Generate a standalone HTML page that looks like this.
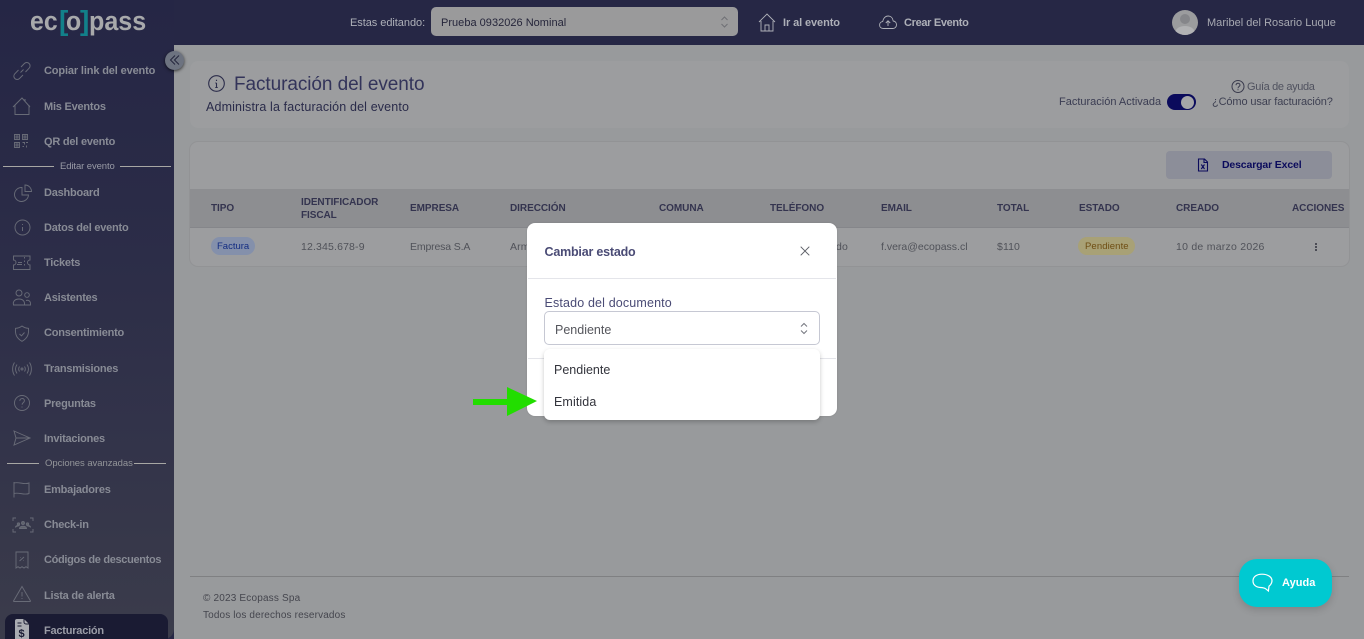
<!DOCTYPE html>
<html lang="es"><head><meta charset="utf-8"><title>Facturación</title>
<style>
*{box-sizing:border-box}
html,body{margin:0;padding:0;width:1364px;height:639px;overflow:hidden;background:#262745;font-family:"Liberation Sans",sans-serif}
.t{position:absolute;white-space:nowrap;line-height:1}
svg{position:absolute;overflow:visible;fill:none}
#side{position:absolute;left:0;top:0;width:174px;height:639px;background:linear-gradient(#252645 0,#2a2b47 200px,#33344a 450px,#3b3c4b 639px);border-bottom-right-radius:10px}
#main{position:absolute;left:174px;top:45px;width:1190px;height:594px;background:#989a9c}
.nav{font-size:11px;font-weight:bold;color:#888b95;left:44px;letter-spacing:-.22px;margin-top:1px}
.ic{left:12px;stroke:#686b77;stroke-width:.95}
.th{font-size:10px;font-weight:bold;color:#34344f;letter-spacing:-.05px;line-height:13px;margin-top:1px}
.td{font-size:10.5px;color:#505259;letter-spacing:.1px;margin-top:.5px}
.card{position:absolute;background:#9c9d9f;border-radius:8px}
.lg{font-size:27px;font-weight:bold;color:#a8a9ab;transform-origin:0 0}
</style></head><body>
<div id="side"></div>
<div id="main"></div>

<!-- logo -->
<div class="t lg" style="left:30px;top:8px;transform:scaleX(.92)">ec</div>
<div class="t" style="left:59px;top:7px;font-size:28px;font-weight:bold;color:#12808a">[</div>
<div class="t lg" style="left:66px;top:8px;transform:scaleX(.92)">o</div>
<div class="t" style="left:80px;top:7px;font-size:28px;font-weight:bold;color:#12808a">]</div>
<div class="t lg" style="left:89px;top:8px;transform:scaleX(.93)">pass</div>

<!-- top bar -->
<div class="t" style="left:350px;top:18px;font-size:11px;color:#aeb0b8;letter-spacing:-.05px">Estas editando:</div>
<div style="position:absolute;left:431px;top:7px;width:307px;height:29px;background:#9a9a9b;border-radius:5px"></div>
<div class="t" style="left:441px;top:18px;font-size:11px;color:#25253a;letter-spacing:.02px">Prueba 0932026 Nominal</div>
<svg style="left:720px;top:15px" width="9" height="14" stroke="#6f7075" stroke-width="1"><path d="M1.5 5 4.500 2 7.500 5M1.5 9 4.500 12 7.500 9"/></svg>
<svg style="left:758px;top:13px" width="18" height="19" stroke="#b0b2b9" stroke-width=".9"><path d="M1 9 9 1l8 8M3 8v10h12V8M7 18v-6h4v6"/></svg>
<div class="t" style="left:783px;top:18px;font-size:11px;font-weight:bold;color:#aeb0b8;letter-spacing:-.1px">Ir al evento</div>
<svg style="left:879px;top:15px" width="18" height="15" stroke="#b0b2b9" stroke-width=".9"><path d="M4.500 13.500C1.500 13.500.6 11.600.6 10 .6 8 2 6.700 3.700 6.600 4.300 3 6.500 1 9 1c2.800 0 4.800 2 5.200 5 2 .2 3.300 1.800 3.300 3.800 0 2-1.500 3.700-3.800 3.700zM9 11V6M6.800 8 9 5.800 11.200 8"/></svg>
<div class="t" style="left:904px;top:18px;font-size:11px;font-weight:bold;color:#aeb0b8;letter-spacing:-.33px">Crear Evento</div>
<div style="position:absolute;left:1172px;top:10px;width:26px;height:25px;border-radius:50%;background:#9b9c9e;overflow:hidden">
<div style="position:absolute;left:8px;top:4px;width:10px;height:10px;border-radius:50%;background:#85868a"></div>
<div style="position:absolute;left:3px;top:16px;width:20px;height:14px;border-radius:50%;background:#b1b2b4"></div></div>
<div class="t" style="left:1207px;top:18px;font-size:11px;color:#a8aab2;letter-spacing:.02px">Maribel del Rosario Luque</div>

<!-- sidebar -->
<div class="t nav" style="top:65px;letter-spacing:-.14px">Copiar link del evento</div>
<div class="t nav" style="top:101px">Mis Eventos</div>
<div class="t nav" style="top:136px">QR del evento</div>
<div class="t nav" style="top:187px">Dashboard</div>
<div class="t nav" style="top:222px">Datos del evento</div>
<div class="t nav" style="top:257px">Tickets</div>
<div class="t nav" style="top:292px">Asistentes</div>
<div class="t nav" style="top:327px">Consentimiento</div>
<div class="t nav" style="top:363px">Transmisiones</div>
<div class="t nav" style="top:398px">Preguntas</div>
<div class="t nav" style="top:433px">Invitaciones</div>
<div class="t nav" style="top:484px">Embajadores</div>
<div class="t nav" style="top:519px">Check-in</div>
<div class="t nav" style="top:554px;letter-spacing:-.33px">Códigos de descuentos</div>
<div class="t nav" style="top:590px">Lista de alerta</div>

<div style="position:absolute;left:3px;top:166px;width:51px;height:1px;background:#a7a7a4"></div>
<div class="t" style="left:60px;top:162px;font-size:9.500px;color:#989aa5;letter-spacing:-.1px">Editar evento</div>
<div style="position:absolute;left:120px;top:166px;width:51px;height:1px;background:#a7a7a4"></div>
<div style="position:absolute;left:7px;top:463px;width:32px;height:1px;background:#a7a7a4"></div>
<div class="t" style="left:45px;top:459px;font-size:9.500px;color:#939599;letter-spacing:-.05px">Opciones avanzadas</div>
<div style="position:absolute;left:134px;top:463px;width:32px;height:1px;background:#a7a7a4"></div>

<svg class="ic" style="top:61px" width="20" height="20"><path d="M8.500 11.500 11.500 8.500M6.500 9 2.800 12.800a3.300 3.300 0 0 0 4.700 4.700l3.500-3.500M13.500 11l3.600-3.800a3.300 3.300 0 0 0-4.700-4.700L9 6"/></svg>
<svg class="ic" style="top:97px" width="20" height="19"><path d="M1 10 10 1l8 9M3 8v9.500h14V8M13 2v2.500"/></svg>
<svg class="ic" style="top:133px" width="18" height="17" stroke-width="1"><path d="M2.500 1.500h5v5h-5zM10.500 1.500h5v5h-5zM2.500 9.500h5v5h-5zM4 3h2v2H4zM12 3h2v2h-2zM4 11h2v2H4zM10.500 9.500h2v2M14 9.500h2M10.500 13.500h1.500M14.500 12.500v2"/></svg>
<svg class="ic" style="top:183px" width="20" height="20"><path d="M9 4.500A7 7 0 1 0 15.500 12H9zM12 2v6.500h6.500A6.500 6.500 0 0 0 12 2z" transform="translate(1 0)"/></svg>
<svg class="ic" style="top:218px" width="20" height="20"><circle cx="10.500" cy="9.500" r="7.500"/><path d="M10.500 9v4M10.500 6v1"/></svg>
<svg class="ic" style="top:255px" width="20" height="16"><path d="M1.500 1h16.500v4a2.500 2.500 0 0 0 0 5v4.500H1.500V10a2.500 2.500 0 0 0 0-5zM12.500 2v1.500M12.500 5.500v1.500M12.500 9v1.500M6 7.500h4M5 9.500h5"/></svg>
<svg class="ic" style="top:289px" width="20" height="18"><circle cx="7" cy="4" r="3"/><circle cx="15" cy="6" r="2.300"/><path d="M1.500 16c-1-4 2-6 5.500-6s6 2 5.500 6zM14 11.500c2.500-.8 5 .6 4.500 4.500h-6"/></svg>
<svg class="ic" style="top:324px" width="20" height="20"><path d="M10 2c2 1.500 4 2.200 6.500 2.300.5 6-1 10-6.500 13C4.500 14.300 3 10.300 3.500 4.300 6 4.200 8 3.500 10 2zM7.500 10l2 1.800 3-3.300"/></svg>
<svg class="ic" style="top:361px" width="20" height="16"><circle cx="10" cy="8" r="1"/><path d="M7.500 5.500c-1 1.500-1 3.500 0 5M12.500 5.500c1 1.500 1 3.500 0 5M5 3.500c-2 3-2 6 0 9M15 3.500c2 3 2 6 0 9M2.500 1.500c-2.500 4-2.500 9 0 13M17.500 1.500c2.500 4 2.500 9 0 13"/></svg>
<svg class="ic" style="top:393px" width="20" height="20"><circle cx="10" cy="10" r="7.500"/><path d="M7.800 7.800c.2-3 4.700-3 4.600-.1 0 2-2.300 1.900-2.300 4M10 13.500v1"/></svg>
<svg class="ic" style="top:429px" width="20" height="18"><path d="M2 2 18 9 2 16l2-7zM4 9h14"/></svg>
<svg class="ic" style="top:481px" width="20" height="17"><path d="M2 1v15.500M2 2c5-1.500 10 2 15 0v10.500c-5 2-10-1.500-15 0"/></svg>
<svg class="ic" style="top:517px" width="22" height="16" stroke-width="1"><path d="M1 4V1h3M18 1h3v3M1 12v3h3M18 15h3v-3"/><circle cx="11" cy="6" r="1.500" fill="#5f626c"/><circle cx="6.500" cy="7" r="1.200" fill="#5f626c"/><circle cx="15.500" cy="7" r="1.200" fill="#5f626c"/><path d="M7.500 11.500c0-3 7-3 7 0zM3.500 10.500c0-2 3-2.500 4-1.500M18.500 10.500c0-2-3-2.500-4-1.500" fill="#5f626c"/></svg>
<svg class="ic" style="top:551px" width="20" height="18"><path d="M4 1h12v16l-2-1.300-2 1.300-2-1.300-2 1.300-2-1.300L4 17zM7.500 10 12 6M8 6.500h.5M11.500 9.500h.5"/></svg>
<svg class="ic" style="top:585px" width="20" height="18"><path d="M10 1.500 18.500 16a.5.500 0 0 1-.5.500H2a.5.500 0 0 1-.5-.5zM10 7v4.500M10 13v1"/></svg>

<div style="position:absolute;left:5px;top:614px;width:163px;height:25px;background:#1a1b33;border-radius:8px 8px 0 0"></div>
<svg style="left:14px;top:619px" width="16" height="20"><path d="M1 2a2 2 0 0 1 2-2h7l5 5v15H1z" fill="#aaacb2"/><path d="M10 0v3a2 2 0 0 0 2 2h3" stroke="#1a1b33"/><path d="M3.500 4h4M3.500 7h4" stroke="#1a1b33"/><text x="4.500" y="18" font-family="Liberation Sans" font-size="11" font-weight="bold" fill="#1a1b33">$</text></svg>
<div class="t nav" style="top:625px;color:#9a9ca6">Facturación</div>

<div style="position:absolute;left:165px;top:51px;width:19px;height:19px;border-radius:50%;background:#6d7380;box-shadow:0 1px 3px rgba(0,0,0,.7)"></div>
<svg style="left:170px;top:55px" width="10" height="10" stroke="#24263c" stroke-width="1"><path d="M5 .5.500 5 5 9.500M9 .5 4.500 5 9 9.500"/></svg>

<!-- heading card -->
<div class="card" style="left:190px;top:61px;width:1159px;height:67px"></div>
<svg style="left:208px;top:75px" width="18" height="18" stroke="#2b2c4a" stroke-width="1.100"><circle cx="8.500" cy="8.500" r="7.800"/><path d="M8.500 8v4.500M7.300 8h1.200M7.300 12.500h2.400M8.500 4.700v1.300"/></svg>
<div class="t" style="left:234px;top:75px;font-size:19px;color:#33345a;letter-spacing:-.08px">Facturación del evento</div>
<div class="t" style="left:206px;top:101px;font-size:12.500px;color:#2a2b4a;letter-spacing:.14px">Administra la facturación del evento</div>
<div class="t" style="left:1059px;top:97px;font-size:11px;color:#3a3c52;letter-spacing:0">Facturación Activada</div>
<div style="position:absolute;left:1167px;top:94px;width:29px;height:16px;border-radius:8px;background:#0b0b5c"></div>
<div style="position:absolute;left:1181px;top:96px;width:13px;height:13px;border-radius:50%;background:#a5a6a8"></div>
<svg style="left:1231px;top:80px" width="14" height="14" stroke="#3a3b4d" stroke-width="1"><circle cx="7" cy="6.500" r="6"/><path d="M5 5.200c.2-2.500 4-2.500 4-.2 0 1.500-2 1.500-2 3.200M7 9.300v1"/></svg>
<div class="t" style="left:1247px;top:81.500px;font-size:11px;color:#50525f;letter-spacing:-.36px">Guía de ayuda</div>
<div class="t" style="left:1212px;top:97px;font-size:11px;color:#3e4052;letter-spacing:-.12px">¿Cómo usar facturación?</div>

<!-- table card -->
<div class="card" style="left:190px;top:142px;width:1159px;height:124px;overflow:hidden;box-shadow:0 0 0 1px #929395">
<div style="position:absolute;left:0;top:47px;width:100%;height:39px;background:#8d8e91;border-bottom:1px solid #85868a"></div>
</div>
<div style="position:absolute;left:1166px;top:151px;width:166px;height:28px;background:#8c8e99;border-radius:4px"></div>
<svg style="left:1197px;top:158px" width="12" height="14" stroke="#0b0b5c" stroke-width="1.100"><path d="M1.500 1h6l3 3v9h-9zM7 1v3.500h3.500M4.300 6.500l3.200 4.500M7.500 6.500 4.300 11"/></svg>
<div class="t" style="left:1222px;top:160px;font-size:10.500px;font-weight:bold;color:#0b0b5c;letter-spacing:-.15px">Descargar Excel</div>

<div class="t th" style="left:211px;top:201px">TIPO</div>
<div class="t th" style="left:301px;top:195px;letter-spacing:-.08px">IDENTIFICADOR<br>FISCAL</div>
<div class="t th" style="left:410px;top:201px">EMPRESA</div>
<div class="t th" style="left:510px;top:201px">DIRECCIÓN</div>
<div class="t th" style="left:659px;top:201px">COMUNA</div>
<div class="t th" style="left:770px;top:201px">TELÉFONO</div>
<div class="t th" style="left:881px;top:201px">EMAIL</div>
<div class="t th" style="left:997px;top:201px">TOTAL</div>
<div class="t th" style="left:1079px;top:201px">ESTADO</div>
<div class="t th" style="left:1176px;top:201px">CREADO</div>
<div class="t th" style="left:1292px;top:201px">ACCIONES</div>

<div style="position:absolute;left:211px;top:237px;width:44px;height:18px;border-radius:9px;background:#8490ab"></div>
<div class="t" style="left:217px;top:242px;font-size:9.500px;color:#122c82">Factura</div>
<div class="t td" style="left:301px;top:241px;letter-spacing:.15px">12.345.678-9</div>
<div class="t td" style="left:410px;top:241px;letter-spacing:-.15px">Empresa S.A</div>
<div class="t td" style="left:510px;top:241px">Arm</div>
<div class="t td" style="left:836px;top:241px">do</div>
<div class="t td" style="left:881px;top:241px;letter-spacing:0">f.vera@ecopass.cl</div>
<div class="t td" style="left:997px;top:241px">$110</div>
<div style="position:absolute;left:1078px;top:237px;width:57px;height:18px;border-radius:9px;background:#a8a176"></div>
<div class="t" style="left:1085px;top:242px;font-size:9.500px;color:#6e4d12;letter-spacing:.1px">Pendiente</div>
<div class="t td" style="left:1176px;top:241px;letter-spacing:.25px">10 de marzo 2026</div>
<div style="position:absolute;left:1315px;top:243px;width:2px;height:2px;background:#4b4c55;box-shadow:0 3px 0 #4b4c55,0 6px 0 #4b4c55"></div>

<!-- footer -->
<div style="position:absolute;left:190px;top:576px;width:1159px;height:1px;background:#7f8082"></div>
<div class="t" style="left:203px;top:593.500px;font-size:10px;color:#45464e;letter-spacing:.18px">© 2023 Ecopass Spa</div>
<div class="t" style="left:203px;top:610.500px;font-size:10px;color:#45464e;letter-spacing:.14px">Todos los derechos reservados</div>

<!-- help -->
<div style="position:absolute;left:1239px;top:559px;width:93px;height:48px;border-radius:18px;background:#00c9d1;box-shadow:0 3px 8px rgba(0,0,0,.15)"></div>
<svg style="left:1252px;top:573px" width="22" height="21" stroke="#fff" stroke-width="1.200"><path d="M10 1.200C4.500 1.200 1 3.800 1 8c0 3.800 3 6.300 7.500 6.500 2.300.1 4 .4 5.200 1.300l2.700 2.200.6-4.800C18.800 11.800 20 10 20 7.800 20 3.800 15.500 1.200 10 1.200z"/></svg>
<div class="t" style="left:1282px;top:578px;font-size:11px;font-weight:bold;color:#fff;letter-spacing:.03px">Ayuda</div>

<!-- modal -->
<div style="position:absolute;left:527px;top:223px;width:310px;height:193px;background:#fff;border-radius:8px;box-shadow:0 0 2px rgba(0,0,0,.1)"></div>
<div class="t" style="left:544.500px;top:245.500px;font-size:12.500px;font-weight:bold;color:#4a4b75;letter-spacing:-.2px">Cambiar estado</div>
<svg style="left:800px;top:246px" width="10" height="10" stroke="#5e6068" stroke-width="1"><path d="M.7.700 9.300 9.300M9.300.700.700 9.300"/></svg>
<div style="position:absolute;left:528px;top:278px;width:308px;height:1px;background:#e4e5ea"></div>
<div class="t" style="left:544.500px;top:296.500px;font-size:12.500px;color:#4a4b75;letter-spacing:.15px">Estado del documento</div>
<div style="position:absolute;left:544px;top:311px;width:276px;height:34px;background:#fff;border:1px solid #c6c8d3;border-radius:5px"></div>
<div class="t" style="left:555px;top:323.500px;font-size:12.500px;color:#55565c;letter-spacing:0">Pendiente</div>
<svg style="left:800px;top:322px" width="8" height="13" stroke="#74767e" stroke-width="1"><path d="M1 4.500 4 1.500 7 4.500M1 8.500 4 11.500 7 8.500"/></svg>
<div style="position:absolute;left:528px;top:358px;width:308px;height:1px;background:#e4e5ea"></div>
<div style="position:absolute;left:544px;top:349px;width:276px;height:71px;background:#fff;border-radius:6px;box-shadow:0 2px 5px rgba(0,0,0,.22)"></div>
<div class="t" style="left:554px;top:363.500px;font-size:12.500px;color:#33343c;letter-spacing:0">Pendiente</div>
<div class="t" style="left:554px;top:395.500px;font-size:12.500px;color:#33343c;letter-spacing:.1px">Emitida</div>

<!-- arrow -->
<svg style="left:473px;top:386px" width="66" height="30"><path d="M0 13H34V1L64 15 34 30V19H0z" fill="#22dd00"/></svg>
</body></html>
